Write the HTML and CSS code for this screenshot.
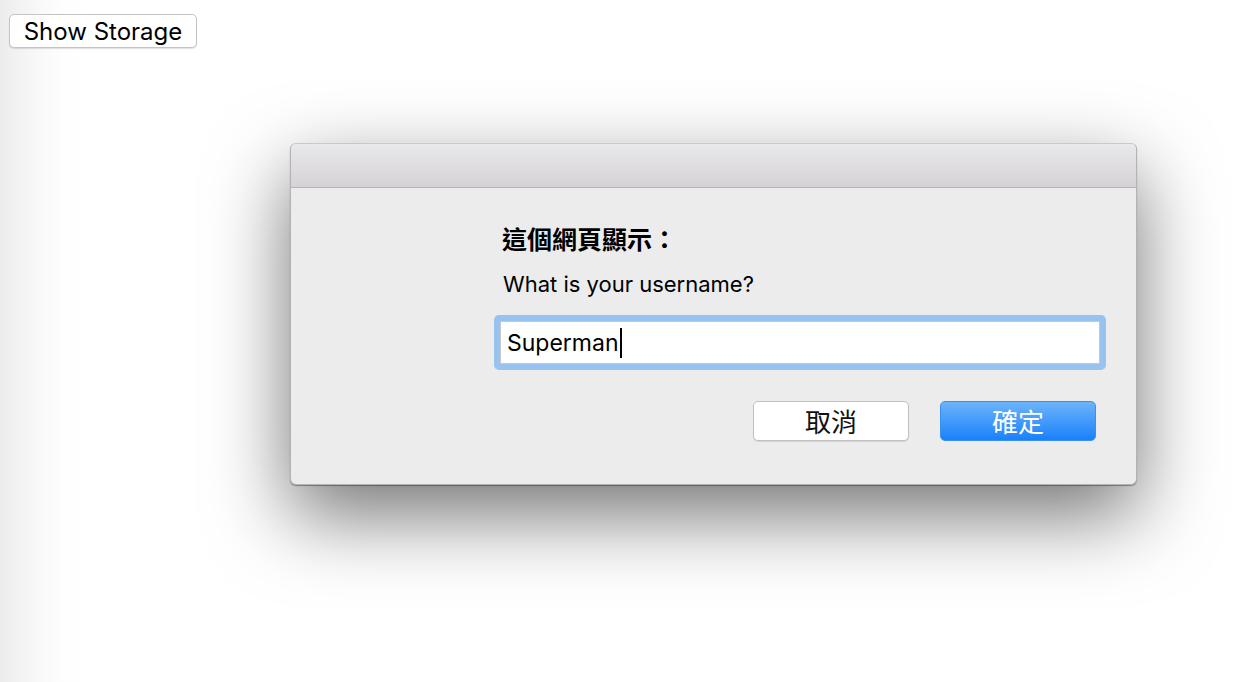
FILE: index.html
```html
<!DOCTYPE html>
<html lang="zh-Hant">
<head>
<meta charset="utf-8">
<title>Prompt</title>
<link rel="stylesheet" href="styles.css">
</head>
<body>
<div class="page">
  <button class="storage-btn" type="button">Show Storage</button>
  <div class="dialog">
    <div class="titlebar"></div>
    <div class="content">
      <div class="heading">這個網頁顯示：</div>
      <div class="message">What is your username?</div>
      <div class="field-ring">
        <div class="field"><span class="value">Superman</span><span class="caret"></span></div>
      </div>
      <div class="actions">
        <button class="btn btn-cancel" type="button">取消</button>
        <button class="btn btn-ok" type="button">確定</button>
      </div>
    </div>
  </div>
</div>
</body>
</html>
```

FILE: styles.css
```css
html, body {
  margin: 0;
  padding: 0;
  height: 100%;
}
body {
  background: linear-gradient(to right, #ececec 0px, #f3f3f3 20px, #f9f9f9 40px, #fdfdfd 60px, #ffffff 85px);
  font-family: Inter, "Noto Sans CJK TC", sans-serif;
  color: #000;
  overflow: hidden;
}
.page {
  display: flex;
  flex-direction: column;
  align-items: flex-start;
  padding: 14px 0 0 9px;
}
.storage-btn {
  height: 34px;
  width: 188px;
  padding: 0;
  background: #fff;
  border: 1px solid #c4c4c4;
  border-radius: 5px;
  box-shadow: 0 1px 1px rgba(0,0,0,0.12);
  font-family: Inter, "Noto Sans CJK TC", sans-serif;
  font-size: 24px;
  line-height: 33px;
  color: #000;
}
.dialog {
  margin: 95px 0 0 281px;
  width: 847px;
  height: 342px;
  border-radius: 6px;
  background: #ececec;
  border: 1px solid #b3b3b3;
  border-top-color: #c9c9c9;
  box-sizing: border-box;
  box-shadow: 0 1px 1px rgba(0,0,0,0.35), 0 30px 80px rgba(0,0,0,0.55);
  overflow: hidden;
  display: flex;
  flex-direction: column;
}
.titlebar {
  height: 43px;
  background: linear-gradient(to bottom, #e9e8ea, #d4d2d5);
  border-bottom: 1px solid #b4b3b5;
  flex: none;
}
.content {
  padding: 35px 30px 0 203px;
  display: flex;
  flex-direction: column;
}
.heading {
  font-family: "Noto Sans CJK TC", sans-serif;
  font-size: 25px;
  font-weight: 700;
  line-height: 30px;
  margin-left: 8px;
}
.message {
  font-size: 22px;
  line-height: 26px;
  margin: 18px 0 0 9px;
}
.field-ring {
  margin-top: 18px;
  padding: 6px;
  background: #98c2f0;
  border-radius: 5px;
}
.field {
  height: 43px;
  background: #fff;
  border: 1px solid #c8c8c8;
  box-sizing: border-box;
  display: flex;
  align-items: center;
  padding-left: 6px;
  font-size: 23px;
}
.caret {
  display: inline-block;
  width: 2px;
  height: 30px;
  background: #000;
  margin-left: 1px;
}
.actions {
  display: flex;
  justify-content: flex-end;
  gap: 31px;
  margin-top: 31px;
  padding-right: 10px;
}
.btn {
  width: 156px;
  height: 40px;
  border-radius: 5px;
  font-family: "Noto Sans CJK TC", sans-serif;
  font-size: 26px;
  line-height: 38px;
  padding: 0;
}
.btn-cancel {
  background: #fff;
  border: 1px solid #c0c0c0;
  box-shadow: 0 1px 1px rgba(0,0,0,0.1);
  color: #111;
}
.btn-ok {
  background: linear-gradient(to bottom, #6db4fa, #1a81fb);
  border: 1px solid #3a8ff4;
  color: #fff;
}
```
